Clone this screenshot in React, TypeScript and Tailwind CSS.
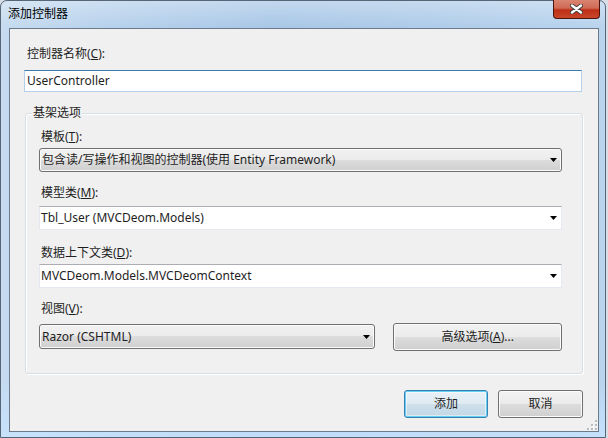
import type { ReactNode } from 'react';

const ui = "font-['Segoe_UI','Noto_Sans','Noto_Sans_CJK_SC',sans-serif] text-[12px] leading-[16px] text-[#1e1e1e]";

function Arrow() {
  return (
    <svg width="7" height="4" viewBox="0 0 7 4" className="shrink-0">
      <path d="M0 0H7L3.5 4Z" fill="#000" />
    </svg>
  );
}

function Label({ children, className = '' }: { children: ReactNode; className?: string }) {
  return <div className={`h-[16px] pl-[2px] ${className}`}>{children}</div>;
}

function DropCombo({ text, className = '' }: { text: string; className?: string }) {
  return (
    <div
      className={`flex items-center h-[24px] rounded-[3px] border border-[#707070] bg-[linear-gradient(#f2f2f2_0%,#ebebeb_50%,#dddddd_50%,#cfcfcf_100%)] shadow-[inset_0_0_0_1px_#fbfbfb] pl-[2px] pr-[4px] ${className}`}
    >
      <span className="flex-1 whitespace-nowrap">{text}</span>
      <Arrow />
    </div>
  );
}

function EditCombo({ text, className = '' }: { text: string; className?: string }) {
  return (
    <div
      className={`flex items-center h-[24px] border border-[#e3e9ef] border-t-[#abadb3] bg-white pl-[1px] pr-[4px] ${className}`}
    >
      <span className="flex-1 whitespace-nowrap">{text}</span>
      <Arrow />
    </div>
  );
}

function CloseGlyph() {
  return (
    <svg width="13" height="10" viewBox="0 0 13 10">
      <path d="M2 1.5L11 8.5M11 1.5L2 8.5" stroke="#3e3e3e" strokeWidth="4.2" strokeLinecap="round" />
      <path d="M2 1.5L11 8.5M11 1.5L2 8.5" stroke="#ffffff" strokeWidth="2.4" strokeLinecap="round" />
    </svg>
  );
}

function SizeGrip() {
  return (
    <svg width="10" height="10" viewBox="0 0 10 10">
      {[
        [8, 0], [8, 4], [4, 4], [8, 8], [4, 8], [0, 8],
      ].map(([x, y]) => (
        <g key={`${x}-${y}`}>
          <rect x={x + 1} y={y + 1} width="2" height="2" fill="#ffffff" />
          <rect x={x} y={y} width="2" height="2" fill="#b8bcc2" />
        </g>
      ))}
    </svg>
  );
}

export default function App() {
  return (
    <div className={`w-[608px] h-[438px] bg-[#d7dee6] ${ui}`}>
      <div className="w-[606px] h-[438px] flex flex-col rounded-t-[7px] border border-[#566677] pl-[8px] pr-[6px] pb-[5px] bg-[linear-gradient(180deg,rgba(255,255,255,0.3)_0px,rgba(255,255,255,0)_26px,rgba(255,255,255,0)_380px,rgba(200,228,255,0.8)_438px),linear-gradient(90deg,#c6dbf0_0%,#b7d1ec_18%,#a9c7e7_45%,#aecbe9_70%,#bad4ee_100%)]">
        {/* Title bar */}
        <div className="h-[27px] flex items-start justify-between">
          <div className="ml-[-1px] mt-[5px] text-[#000]">添加控制器</div>
          <div className="mt-[-1px] mr-[-1px] w-[47px] h-[19px] rounded-b-[4px] border border-t-0 border-[#4a140d] bg-[linear-gradient(#d98472_0%,#cf6a55_45%,#bd2f16_55%,#c9462a_100%)] flex items-center justify-center">
            <CloseGlyph />
          </div>
        </div>

        {/* Client area */}
        <div className="relative flex-1 flex flex-col border border-[#6b7b8c] bg-[#f0f0f0] pl-[14px] pr-[15px]">
          <Label className="mt-[17px] pl-[3px]">
            控制器名称(<u>C</u>):
          </Label>
          <div className="mt-[8px] h-[22px] w-[558px] flex items-center border border-[#b3cfe9] border-t-[#3d7bad] bg-white pl-[2px]">
            UserController
          </div>

          {/* Group box */}
          <div className="relative mt-[21px] ml-[1px] w-[558px] h-[261px] flex flex-col rounded-[3px] border border-[#d5dfe5] shadow-[inset_1px_1px_0_#ffffff,1px_1px_0_#ffffff] pl-[13px] pr-[20px]">
            <span className="absolute top-[-9px] left-[6px] px-[1px] bg-[#f0f0f0]">基架选项</span>

            <Label className="mt-[15px]">
              模板(<u>T</u>):
            </Label>
            <DropCombo className="mt-[3px]" text="包含读/写操作和视图的控制器(使用 Entity Framework)" />

            <Label className="mt-[13px]">
              模型类(<u>M</u>):
            </Label>
            <EditCombo className="mt-[5px]" text="Tbl_User (MVCDeom.Models)" />

            <Label className="mt-[15px]">
              数据上下文类(<u>D</u>):
            </Label>
            <EditCombo className="mt-[3px]" text="MVCDeom.Models.MVCDeomContext" />

            <Label className="mt-[13px]">
              视图(<u>V</u>):
            </Label>
            <div className="mt-[6px] flex items-start gap-[18px]">
              <DropCombo className="mt-[1px] w-[337px] h-[25px]" text="Razor (CSHTML)" />
              <button className="w-[169px] h-[28px] rounded-[3px] border border-[#707070] bg-[linear-gradient(#f2f2f2_0%,#ebebeb_50%,#dddddd_50%,#cfcfcf_100%)] shadow-[inset_0_0_0_1px_#fbfbfb]">
                高级选项(<u>A</u>)...
              </button>
            </div>
          </div>

          {/* Dialog buttons */}
          <div className="mt-[16px] flex justify-end gap-[10px]">
            <button className="w-[84px] h-[28px] rounded-[3px] border border-[#3c7fb1] bg-[linear-gradient(#e8f1f7_0%,#dfeaf2_50%,#cfe0eb_50%,#c2d7e6_100%)] shadow-[inset_0_0_0_1px_#62d1f5,inset_0_0_0_2px_rgba(255,255,255,0.45)]">
              添加
            </button>
            <button className="w-[85px] h-[28px] rounded-[3px] border border-[#707070] bg-[linear-gradient(#f2f2f2_0%,#ebebeb_50%,#dddddd_50%,#cfcfcf_100%)] shadow-[inset_0_0_0_1px_#fbfbfb]">
              取消
            </button>
          </div>

          <div className="absolute right-[1px] bottom-[1px]">
            <SizeGrip />
          </div>
        </div>
      </div>
    </div>
  );
}
